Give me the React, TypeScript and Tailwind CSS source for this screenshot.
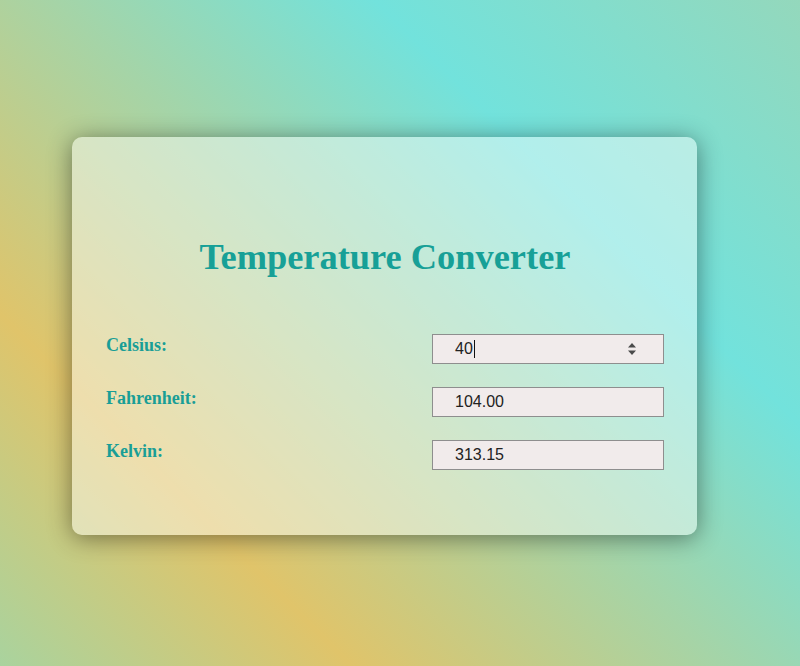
import React from 'react';

const serif = 'font-["Liberation_Serif","Times_New_Roman",serif]';

const Field = ({ label, value, spinner }: { label: string; value: string; spinner?: boolean }) => (
  <div className="flex items-start justify-between">
    <label className={`${serif} mt-[-2px] text-[18px] font-bold text-[#199e96]`}>{label}</label>
    <div className="flex h-[30px] w-[232px] items-center border border-[#8e8e8e] bg-[#f1ebeb] pl-[22px] pr-[26px] font-['Liberation_Sans',Arial,sans-serif] text-[16px] text-[#222]">
      <span>{value}</span>
      {spinner && (
        <>
          <span className="ml-[1px] h-[18px] w-px bg-[#111]" />
          <svg className="ml-auto" width="10" height="14" viewBox="0 0 10 14">
            <path d="M5 1 L9 5.5 H1 Z" fill="#4a4a4a" />
            <path d="M5 13 L9 8.5 H1 Z" fill="#4a4a4a" />
          </svg>
        </>
      )}
    </div>
  </div>
);

export default function App() {
  return (
    <div className="flex h-[666px] w-full items-start bg-[linear-gradient(45deg,#a9d39e_0%,#e0c46a_24%,#72e2dc_71%,#94d8bc_100%)] pl-[72px] pt-[137px]">
      <div className="flex h-[398px] w-[625px] flex-col rounded-[10px] bg-white/45 pl-[34px] pr-[33px] pt-[100px] shadow-[0_3px_24px_rgba(0,0,0,0.45)]">
        <h1 className={`${serif} text-center text-[36.4px] font-bold leading-[41px] text-[#17a097]`}>
          Temperature Converter
        </h1>
        <div className="mt-[56px] flex flex-col gap-[23px]">
          <Field label="Celsius:" value="40" spinner />
          <Field label="Fahrenheit:" value="104.00" />
          <Field label="Kelvin:" value="313.15" />
        </div>
      </div>
    </div>
  );
}
